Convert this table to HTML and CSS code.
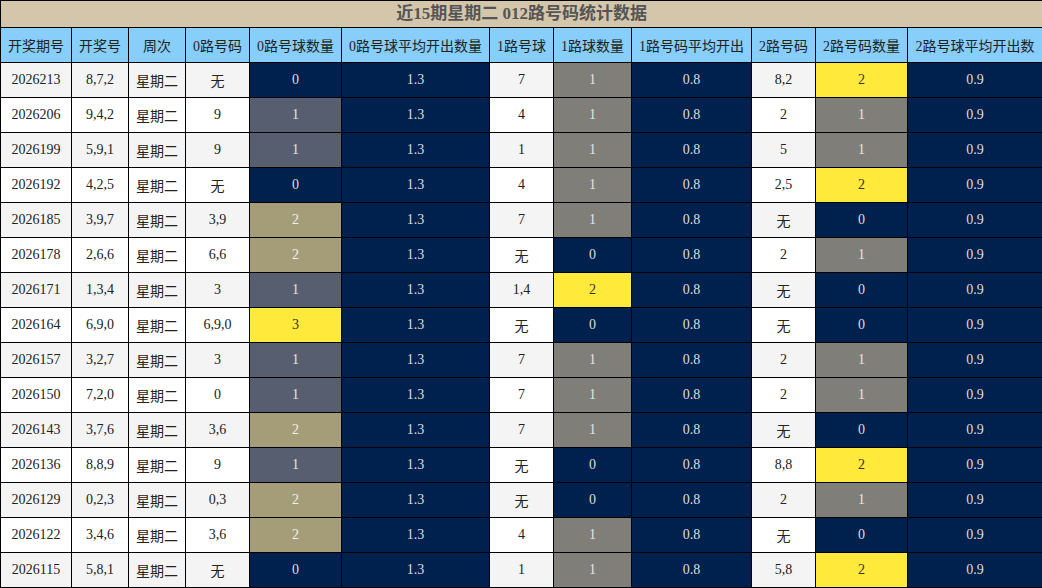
FILE: index.html
```html
<!DOCTYPE html>
<html lang="zh-CN">
<head>
<meta charset="utf-8">
<title>近15期星期二 012路号码统计数据</title>
<link rel="stylesheet" href="styles.css">
</head>
<body>
<table class="stats">
<colgroup>
<col class="c1"><col class="c2"><col class="c3"><col class="c4"><col class="c5"><col class="c6">
<col class="c7"><col class="c8"><col class="c9"><col class="c10"><col class="c11"><col class="c12">
</colgroup>
<thead>
<tr class="title-row"><th colspan="12" class="title">近15期星期二 012路号码统计数据</th></tr>
<tr class="head-row">
<th>开奖期号</th><th>开奖号</th><th>周次</th><th>0路号码</th><th>0路号球数量</th><th>0路号球平均开出数量</th><th>1路号球</th><th>1路球数量</th><th>1路号码平均开出</th><th>2路号码</th><th>2路号码数量</th><th>2路号球平均开出数</th>
</tr>
</thead>
<tbody>
<tr class="odd"><td>2026213</td><td>8,7,2</td><td>星期二</td><td>无</td><td class="navy">0</td><td class="navy">1.3</td><td>7</td><td class="gray">1</td><td class="navy">0.8</td><td>8,2</td><td class="yellow">2</td><td class="navy">0.9</td></tr>
<tr><td>2026206</td><td>9,4,2</td><td>星期二</td><td>9</td><td class="slate">1</td><td class="navy">1.3</td><td>4</td><td class="gray">1</td><td class="navy">0.8</td><td>2</td><td class="gray">1</td><td class="navy">0.9</td></tr>
<tr class="odd"><td>2026199</td><td>5,9,1</td><td>星期二</td><td>9</td><td class="slate">1</td><td class="navy">1.3</td><td>1</td><td class="gray">1</td><td class="navy">0.8</td><td>5</td><td class="gray">1</td><td class="navy">0.9</td></tr>
<tr><td>2026192</td><td>4,2,5</td><td>星期二</td><td>无</td><td class="navy">0</td><td class="navy">1.3</td><td>4</td><td class="gray">1</td><td class="navy">0.8</td><td>2,5</td><td class="yellow">2</td><td class="navy">0.9</td></tr>
<tr class="odd"><td>2026185</td><td>3,9,7</td><td>星期二</td><td>3,9</td><td class="khaki">2</td><td class="navy">1.3</td><td>7</td><td class="gray">1</td><td class="navy">0.8</td><td>无</td><td class="navy">0</td><td class="navy">0.9</td></tr>
<tr><td>2026178</td><td>2,6,6</td><td>星期二</td><td>6,6</td><td class="khaki">2</td><td class="navy">1.3</td><td>无</td><td class="navy">0</td><td class="navy">0.8</td><td>2</td><td class="gray">1</td><td class="navy">0.9</td></tr>
<tr class="odd"><td>2026171</td><td>1,3,4</td><td>星期二</td><td>3</td><td class="slate">1</td><td class="navy">1.3</td><td>1,4</td><td class="yellow">2</td><td class="navy">0.8</td><td>无</td><td class="navy">0</td><td class="navy">0.9</td></tr>
<tr><td>2026164</td><td>6,9,0</td><td>星期二</td><td>6,9,0</td><td class="yellow">3</td><td class="navy">1.3</td><td>无</td><td class="navy">0</td><td class="navy">0.8</td><td>无</td><td class="navy">0</td><td class="navy">0.9</td></tr>
<tr class="odd"><td>2026157</td><td>3,2,7</td><td>星期二</td><td>3</td><td class="slate">1</td><td class="navy">1.3</td><td>7</td><td class="gray">1</td><td class="navy">0.8</td><td>2</td><td class="gray">1</td><td class="navy">0.9</td></tr>
<tr><td>2026150</td><td>7,2,0</td><td>星期二</td><td>0</td><td class="slate">1</td><td class="navy">1.3</td><td>7</td><td class="gray">1</td><td class="navy">0.8</td><td>2</td><td class="gray">1</td><td class="navy">0.9</td></tr>
<tr class="odd"><td>2026143</td><td>3,7,6</td><td>星期二</td><td>3,6</td><td class="khaki">2</td><td class="navy">1.3</td><td>7</td><td class="gray">1</td><td class="navy">0.8</td><td>无</td><td class="navy">0</td><td class="navy">0.9</td></tr>
<tr><td>2026136</td><td>8,8,9</td><td>星期二</td><td>9</td><td class="slate">1</td><td class="navy">1.3</td><td>无</td><td class="navy">0</td><td class="navy">0.8</td><td>8,8</td><td class="yellow">2</td><td class="navy">0.9</td></tr>
<tr class="odd"><td>2026129</td><td>0,2,3</td><td>星期二</td><td>0,3</td><td class="khaki">2</td><td class="navy">1.3</td><td>无</td><td class="navy">0</td><td class="navy">0.8</td><td>2</td><td class="gray">1</td><td class="navy">0.9</td></tr>
<tr><td>2026122</td><td>3,4,6</td><td>星期二</td><td>3,6</td><td class="khaki">2</td><td class="navy">1.3</td><td>4</td><td class="gray">1</td><td class="navy">0.8</td><td>无</td><td class="navy">0</td><td class="navy">0.9</td></tr>
<tr class="odd"><td>2026115</td><td>5,8,1</td><td>星期二</td><td>无</td><td class="navy">0</td><td class="navy">1.3</td><td>1</td><td class="gray">1</td><td class="navy">0.8</td><td>5,8</td><td class="yellow">2</td><td class="navy">0.9</td></tr>
</tbody>
</table>
</body>
</html>
```

FILE: styles.css
```css
html, body {
  margin: 0;
  padding: 0;
  background: #ffffff;
}

.stats {
  border-collapse: collapse;
  table-layout: fixed;
  width: 1042px;
  font-family: "Liberation Serif", "Noto Sans CJK SC", serif;
  font-size: 14px;
  color: #222222;
}

.c1 { width: 71px; }
.c2 { width: 57px; }
.c3 { width: 57px; }
.c4 { width: 64px; }
.c5 { width: 92px; }
.c6 { width: 148px; }
.c7 { width: 64px; }
.c8 { width: 78px; }
.c9 { width: 120px; }
.c10 { width: 64px; }
.c11 { width: 92px; }
.c12 { width: 135px; }

.stats th,
.stats td {
  border: 1px solid #000000;
  padding: 0;
  text-align: center;
  vertical-align: middle;
  overflow: hidden;
  white-space: nowrap;
}

.title-row { height: 27px; }

.title {
  background: #d4c6aa;
  color: #555555;
  font-size: 17px;
  font-weight: bold;
  line-height: 24px;
}

.head-row { height: 35px; }

.head-row th {
  background: #87cefa;
  color: #222222;
  font-weight: normal;
  font-size: 14px;
}

.stats tbody tr { height: 35px; }

.stats tbody tr td { background: #ffffff; }
.stats tbody tr.odd td { background: #f4f4f4; }

.stats tbody tr td.navy { background: #00214d; color: #dddddd; }
.stats tbody tr td.gray { background: #7f7e79; color: #e4e4e4; }
.stats tbody tr td.slate { background: #565e70; color: #e4e4e4; }
.stats tbody tr td.khaki { background: #a59d77; color: #f0f0f0; }
.stats tbody tr td.yellow { background: #ffe93a; color: #333333; }
```
